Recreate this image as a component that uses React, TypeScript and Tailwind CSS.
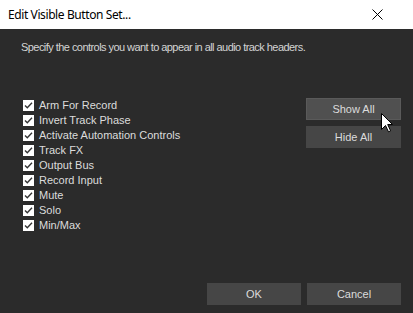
import React from "react";

const items = [
  "Arm For Record",
  "Invert Track Phase",
  "Activate Automation Controls",
  "Track FX",
  "Output Bus",
  "Record Input",
  "Mute",
  "Solo",
  "Min/Max",
];

function Check() {
  return (
    <div className="w-[11px] h-[11px] bg-white flex items-center justify-center shrink-0">
      <svg width="11" height="11" viewBox="0 0 11 11">
        <path d="M2 5.5 L4.3 7.8 L9 2.8" fill="none" stroke="#333" strokeWidth="1.4" />
      </svg>
    </div>
  );
}

export default function App() {
  const font = { fontFamily: '"Liberation Sans", Arial, sans-serif' };
  return (
    <div className="relative w-[413px] h-[313px] flex flex-col overflow-hidden" style={font}>
      <div className="h-[29px] bg-white flex items-center justify-between pl-2 pr-[30px] shrink-0">
        <span className="text-[12px] tracking-[-0.4px] text-black" style={{ fontFamily: '"Noto Sans", sans-serif' }}>
          Edit Visible Button Set...
        </span>
        <svg width="11" height="11" viewBox="0 0 11 11">
          <path d="M0.5 0.5 L10.5 10.5 M10.5 0.5 L0.5 10.5" stroke="#000" strokeWidth="1" />
        </svg>
      </div>
      <div className="flex-1 bg-[#2b2b2b] flex flex-col pl-[21px] pr-[12px] pt-[12px] pb-[8px]">
        <div className="h-[13px] leading-[13px] text-[11px] tracking-[-0.55px] text-[#d4d4d4] whitespace-nowrap">
          Specify the controls you want to appear in all audio track headers.
        </div>
        <div className="mt-[44px] flex">
          <div className="flex flex-col pl-[2px]">
            {items.map((t) => (
              <div key={t} className="h-[15px] flex items-center gap-[5px]">
                <Check />
                <span className="text-[11px] leading-[13px] text-[#dcdcdc]">{t}</span>
              </div>
            ))}
          </div>
          <div className="ml-auto w-[95px] flex flex-col gap-[6px]">
            <button className="h-[22px] bg-[#505050] border border-[#5a5a5a] text-[11px] text-[#dcdcdc]">Show All</button>
            <button className="h-[22px] bg-[#464646] text-[11px] text-[#dcdcdc]">Hide All</button>
          </div>
        </div>
        <div className="mt-auto flex justify-end gap-[6px]">
          <button className="w-[94px] h-[22px] bg-[#464646] text-[11px] text-[#dcdcdc]">OK</button>
          <button className="w-[94px] h-[22px] bg-[#464646] text-[11px] text-[#dcdcdc]">Cancel</button>
        </div>
      </div>
      <svg className="absolute left-[381px] top-[113px]" width="13" height="20" viewBox="0 0 13 20">
        <path d="M0.5 0.5 L0.5 16.5 L4.5 12.5 L7.5 18.8 L9.6 17.8 L6.7 11.5 L11.5 11.5 Z" fill="#fff" stroke="#000" strokeWidth="1" strokeLinejoin="round" />
      </svg>
    </div>
  );
}
